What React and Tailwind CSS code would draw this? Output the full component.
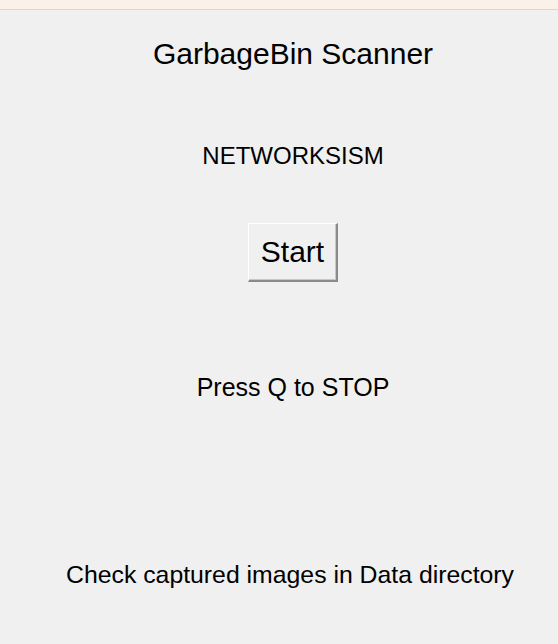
import React from 'react';

const App = () => {
  return (
    <div
      className="w-[558px] h-[644px] bg-[#f0f0f0] flex flex-col text-black overflow-hidden"
      style={{ fontFamily: '"Liberation Sans", Arial, sans-serif' }}
    >
      {/* barre du haut */}
      <div className="h-[10px] bg-[#f9f1ea] border-b border-[#d8d8d8]" />

      <div className="flex flex-col items-center pl-[28px]">
        <h1 className="mt-[27px] text-[30px] leading-[34px] whitespace-nowrap">GarbageBin Scanner</h1>

        <p className="mt-[71px] text-[24px] leading-[28px] whitespace-nowrap">NETWORKSISM</p>

        <button
          type="button"
          className="mt-[53px] w-[90px] h-[59px] bg-[#f0f0f0] text-[30px] leading-none border-t border-l border-t-white border-l-white border-b-2 border-r-2 border-b-[#8a8a8a] border-r-[#8a8a8a] shadow-[inset_-1px_-1px_0_#c8c8c8]"
        >
          Start
        </button>

        <p className="mt-[91px] text-[25px] leading-[28px] whitespace-nowrap">Press Q to STOP</p>

        <p className="mt-[160px] mr-[6px] text-[24.8px] leading-[28px] whitespace-nowrap">Check captured images in Data directory</p>
      </div>
    </div>
  );
};

export default App;
